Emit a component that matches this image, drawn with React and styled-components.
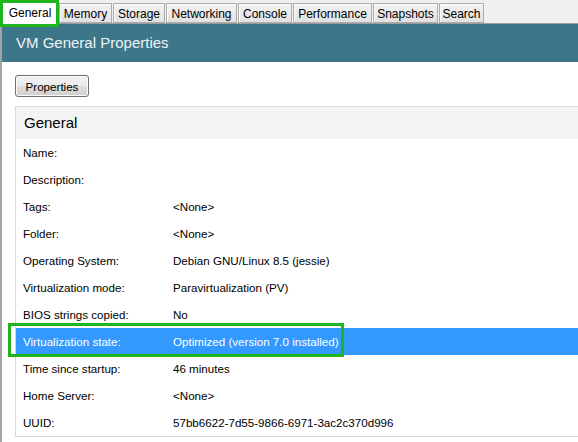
import React from "react";
import styled, { createGlobalStyle } from "styled-components";

const Global = createGlobalStyle`
  html, body { margin: 0; padding: 0; background: #ffffff; }
  body { overflow: hidden; }
`;

const Page = styled.div`
  width: 578px;
  height: 442px;
  overflow: hidden;
  background: #ffffff;
  font-family: "Liberation Sans", Arial, sans-serif;
  color: #000000;
  display: flex;
  flex-direction: column;
`;

const TabStrip = styled.div`
  position: relative;
  height: 23px;
  flex: none;
  display: flex;
  align-items: flex-end;
  gap: 1px;
  padding-left: 2px;
  background: #f0f0f0;
  border-bottom: 1px solid #9c9c9c;
`;

const Tab = styled.div`
  box-sizing: border-box;
  width: ${(p) => p.$w}px;
  height: ${(p) => (p.$active ? 23 : 20)}px;
  margin-bottom: ${(p) => (p.$active ? -1 : 0)}px;
  display: flex;
  align-items: center;
  justify-content: center;
  font-size: 12px;
  color: #000;
  border: 1px solid #acacac;
  border-bottom: ${(p) => (p.$active ? "none" : "1px solid #acacac")};
  background: ${(p) =>
    p.$active ? "#ffffff" : "linear-gradient(#f3f3f3, #e1e1e1)"};
  box-shadow: ${(p) => (p.$active ? "none" : "inset 1px 1px 0 #fcfcfc")};
  padding-top: ${(p) => (p.$active ? 0 : 1)}px;
  position: relative;
  z-index: ${(p) => (p.$active ? 1 : 0)};
`;

const GreenBox = styled.div`
  position: absolute;
  box-sizing: border-box;
  border: 3px solid #1eb51e;
  pointer-events: none;
  z-index: 5;
  left: ${(p) => p.$l}px;
  top: ${(p) => p.$t}px;
  width: ${(p) => p.$w}px;
  height: ${(p) => p.$h}px;
`;

const Main = styled.div`
  flex: 1;
  display: flex;
  flex-direction: column;
  border-left: 2px solid #a3a3a3;
  min-height: 0;
`;

const Header = styled.div`
  height: 38px;
  flex: none;
  background: #3d7589;
  color: #eef4f7;
  font-size: 15px;
  display: flex;
  align-items: center;
  padding-left: 14px;
  padding-bottom: 1px;
  box-sizing: border-box;
`;

const Body = styled.div`
  flex: 1;
  padding: 13px 0 0 13px;
  display: flex;
  flex-direction: column;
  align-items: flex-start;
`;

const Button = styled.button`
  box-sizing: border-box;
  height: 22px;
  width: 74px;
  padding: 0;
  font-family: inherit;
  font-size: 11.6px;
  color: #000;
  border: 1px solid #707070;
  border-radius: 3px;
  background: linear-gradient(#f2f2f2 0%, #ebebeb 50%, #dddddd 51%, #cfcfcf 100%);
  box-shadow: inset 0 0 0 1px #fafafa;
`;

const Panel = styled.div`
  margin-top: 9px;
  align-self: stretch;
  border: 1px solid #d9d9d9;
  border-right: none;
  display: flex;
  flex-direction: column;
`;

const PanelHeader = styled.div`
  height: 32px;
  background: #f4f4f4;
  font-size: 15px;
  display: flex;
  align-items: center;
  padding-left: 8px;
  padding-bottom: 1px;
  box-sizing: border-box;
`;

const Row = styled.div`
  position: relative;
  height: 27px;
  display: flex;
  align-items: center;
  padding-left: 7px;
  font-size: 11.6px;
  background: ${(p) => (p.$selected ? "#3399ff" : "transparent")};
  color: ${(p) => (p.$selected ? "#ffffff" : "#000000")};
`;

const Label = styled.span`
  width: 150px;
  flex: none;
`;

const Value = styled.span`
  white-space: nowrap;
`;

const tabs = [
  ["General", 56],
  ["Memory", 53],
  ["Storage", 52],
  ["Networking", 71],
  ["Console", 54],
  ["Performance", 79],
  ["Snapshots", 65],
  ["Search", 45],
];

const rows = [
  ["Name:", ""],
  ["Description:", ""],
  ["Tags:", "<None>"],
  ["Folder:", "<None>"],
  ["Operating System:", "Debian GNU/Linux 8.5 (jessie)"],
  ["Virtualization mode:", "Paravirtualization (PV)"],
  ["BIOS strings copied:", "No"],
  ["Virtualization state:", "Optimized (version 7.0 installed)", true],
  ["Time since startup:", "46 minutes"],
  ["Home Server:", "<None>"],
  ["UUID:", "57bb6622-7d55-9866-6971-3ac2c370d996"],
];

export default function App() {
  return (
    <Page>
      <Global />
      <TabStrip>
        {tabs.map(([name, w], i) => (
          <Tab key={name} $w={w} $active={i === 0}>
            {name}
          </Tab>
        ))}
        <GreenBox $l={0} $t={0} $w={59} $h={27} />
      </TabStrip>
      <Main>
        <Header>VM General Properties</Header>
        <Body>
          <Button>Properties</Button>
          <Panel>
            <PanelHeader>General</PanelHeader>
            {rows.map(([label, value, sel]) => (
              <Row key={label} $selected={sel}>
                <Label>{label}</Label>
                <Value>{value}</Value>
                {sel && <GreenBox $l={-8} $t={-5} $w={336} $h={34} />}
              </Row>
            ))}
          </Panel>
        </Body>
      </Main>
    </Page>
  );
}
